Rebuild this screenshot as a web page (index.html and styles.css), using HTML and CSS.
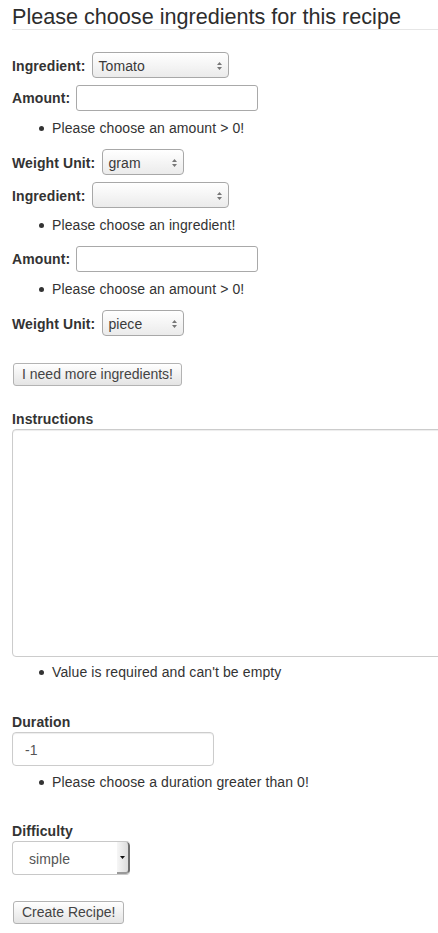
FILE: index.html
```html
<!DOCTYPE html>
<html lang="en">
<head>
<meta charset="utf-8">
<title>Create Recipe</title>
<link rel="stylesheet" href="styles.css">
</head>
<body>
<main class="page">
  <h1 class="title">Please choose ingredients for this recipe</h1>
  <form class="recipe-form">
    <div class="field field-select">
      <label class="inline-label">Ingredient:</label>
      <div class="select select-wide"><span class="select-value">Tomato</span><svg class="select-arrows" width="5" height="10" viewBox="0 0 5 10"><path d="M0 4 L2.5 1 L5 4 Z M0 6 L2.5 9 L5 6 Z" fill="#777"/></svg></div>
    </div>
    <div class="field field-input">
      <label class="inline-label">Amount:</label>
      <input class="text-input" type="text">
    </div>
    <ul class="errors"><li>Please choose an amount &gt; 0!</li></ul>
    <div class="field field-select">
      <label class="inline-label">Weight Unit:</label>
      <div class="select select-narrow"><span class="select-value">gram</span><svg class="select-arrows" width="5" height="10" viewBox="0 0 5 10"><path d="M0 4 L2.5 1 L5 4 Z M0 6 L2.5 9 L5 6 Z" fill="#777"/></svg></div>
    </div>
    <div class="field field-select">
      <label class="inline-label">Ingredient:</label>
      <div class="select select-wide"><span class="select-value">&nbsp;</span><svg class="select-arrows" width="5" height="10" viewBox="0 0 5 10"><path d="M0 4 L2.5 1 L5 4 Z M0 6 L2.5 9 L5 6 Z" fill="#777"/></svg></div>
    </div>
    <ul class="errors"><li>Please choose an ingredient!</li></ul>
    <div class="field field-input">
      <label class="inline-label">Amount:</label>
      <input class="text-input" type="text">
    </div>
    <ul class="errors"><li>Please choose an amount &gt; 0!</li></ul>
    <div class="field field-select">
      <label class="inline-label">Weight Unit:</label>
      <div class="select select-narrow"><span class="select-value">piece</span><svg class="select-arrows" width="5" height="10" viewBox="0 0 5 10"><path d="M0 4 L2.5 1 L5 4 Z M0 6 L2.5 9 L5 6 Z" fill="#777"/></svg></div>
    </div>

    <div class="actions actions-more">
      <button class="btn" type="button">I need more ingredients!</button>
    </div>

    <label class="block-label">Instructions</label>
    <textarea class="textarea"></textarea>
    <ul class="errors errors-after-textarea"><li>Value is required and can't be empty</li></ul>

    <label class="block-label">Duration</label>
    <input class="form-input" type="text" value="-1">
    <ul class="errors errors-after-duration"><li>Please choose a duration greater than 0!</li></ul>

    <label class="block-label">Difficulty</label>
    <div class="select-lg"><span class="select-lg-value">simple</span><span class="select-lg-button"><svg width="5" height="3" viewBox="0 0 5 3"><path d="M0 0 L5 0 L2.5 3 Z" fill="#111"/></svg></span></div>

    <div class="actions actions-submit">
      <button class="btn" type="button">Create Recipe!</button>
    </div>
  </form>
</main>
</body>
</html>
```

FILE: styles.css
```css
* {
  box-sizing: border-box;
}

html,
body {
  margin: 0;
  padding: 0;
  background: #fff;
}

body {
  font-family: "Liberation Sans", Arial, sans-serif;
  font-size: 14px;
  line-height: 20px;
  color: #333;
}

.page {
  padding: 0 0 0 12px;
  overflow: hidden;
  min-height: 933px;
}

.title {
  margin: 0 0 22px;
  padding-top: 5px;
  font-size: 21.6px;
  line-height: 24px;
  font-weight: normal;
  color: #2d2d2d;
  border-bottom: 1px solid #e6e6e6;
}

.recipe-form {
  margin: 0;
  letter-spacing: 0.1px;
}

.field {
  display: flex;
  height: 26px;
  margin-bottom: 7px;
}

.field-select {
  align-items: baseline;
  gap: 7px;
}

.field-input {
  align-items: center;
  gap: 6px;
}

.inline-label {
  font-weight: bold;
  line-height: 20px;
  white-space: nowrap;
}

.select {
  display: flex;
  justify-content: space-between;
  height: 26px;
  padding: 2px 6px 0 5px;
  border: 1px solid #a8a8a8;
  border-radius: 4px;
  background: linear-gradient(#ffffff, #ebebeb);
  line-height: 22px;
  color: #3a3a3a;
}

.select-wide {
  width: 137px;
}

.select-narrow {
  width: 82px;
}

.select-arrows {
  align-self: center;
  flex: none;
}

.text-input {
  width: 182px;
  height: 26px;
  margin: 0;
  padding: 0 4px;
  border: 1px solid #a9a9a9;
  border-radius: 3px;
  font: inherit;
  background: #fff;
}

.errors {
  margin: 0 0 11px;
  padding-left: 40px;
  list-style: none;
}

.errors li {
  line-height: 20px;
}

.errors li::before {
  content: "";
  display: inline-block;
  width: 5px;
  height: 5px;
  margin: 0 8px 0 -13px;
  border-radius: 50%;
  background: #333;
  vertical-align: 2px;
}

.errors-after-textarea {
  margin: 5px 0 30px;
}

.errors-after-duration {
  margin: 6px 0 29px;
}

.actions {
  display: flex;
  height: 23px;
}

.actions-more {
  margin: 27px 0 23px;
}

.actions-submit {
  margin-top: 26px;
}

.btn {
  height: 23px;
  margin: 0 0 0 1px;
  padding: 0 8px;
  border: 1px solid #b3b3b3;
  border-radius: 3px;
  background: linear-gradient(#ffffff, #e4e4e4);
  font-family: "Liberation Sans", Arial, sans-serif;
  font-size: 14px;
  letter-spacing: 0;
  line-height: 21px;
  color: #444;
}

.block-label {
  display: block;
  font-weight: bold;
  line-height: 20px;
}

.textarea {
  display: block;
  width: 470px;
  height: 228px;
  margin: 0;
  border: 1px solid #cccccc;
  border-radius: 4px;
  box-shadow: inset 0 1px 1px rgba(0, 0, 0, 0.075);
  resize: none;
  font: inherit;
}

.form-input {
  display: block;
  width: 202px;
  height: 34px;
  margin: 0;
  padding: 7px 12px 5px;
  border: 1px solid #cccccc;
  border-radius: 4px;
  box-shadow: inset 0 1px 1px rgba(0, 0, 0, 0.075);
  font: inherit;
  line-height: 20px;
  color: #555;
}

.select-lg {
  display: flex;
  justify-content: space-between;
  width: 118px;
  height: 34px;
  padding-left: 16px;
  border: 1px solid #c8c8c8;
  border-right: none;
  border-radius: 4px;
  background: #fff;
  color: #555;
  line-height: 32px;
  overflow: hidden;
}

.select-lg-value {
  padding-top: 1px;
}

.select-lg-button {
  display: flex;
  align-items: center;
  justify-content: center;
  width: 13px;
  height: 100%;
  background: linear-gradient(to right, #f6f6f6, #dcdcdc);
  border-right: 2px solid #6e6e6e;
  border-bottom: 2px solid #9a9a9a;
  border-radius: 0 4px 4px 0;
}
```
